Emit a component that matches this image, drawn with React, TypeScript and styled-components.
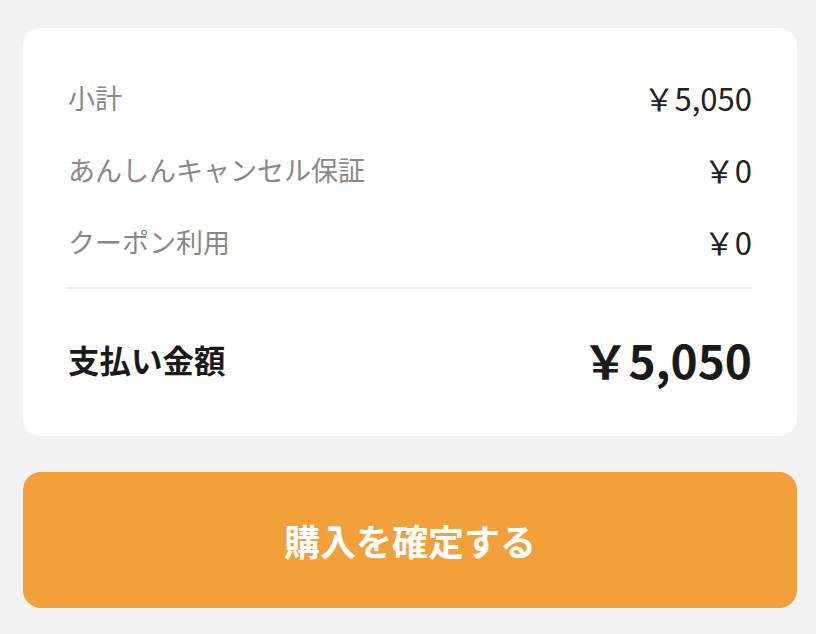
import React from 'react';
import styled, { createGlobalStyle } from 'styled-components';

const GlobalStyle = createGlobalStyle`
  html, body {
    margin: 0;
    padding: 0;
    background: #f2f2f2;
  }
  body {
    font-family: "Noto Sans CJK JP", "Noto Sans", sans-serif;
  }
`;

const Page = styled.div`
  padding: 28px 19px 0 23px;
  display: flex;
  flex-direction: column;
  gap: 36px;
`;

const Card = styled.section`
  background: #fff;
  border-radius: 18px;
  padding: 49px 45px 47px;
  display: flex;
  flex-direction: column;
`;

const Rows = styled.div`
  display: flex;
  flex-direction: column;
  gap: 32px;
`;

const Row = styled.div`
  display: flex;
  justify-content: space-between;
  align-items: center;
  height: 40px;
`;

const Label = styled.span`
  font-size: 27px;
  color: #888;
`;

const Value = styled.span`
  font-size: 31px;
  color: #222;
`;

const Divider = styled.hr`
  border: none;
  height: 2px;
  background: #e9e9e9;
  margin: 26px 0 0;
`;

const TotalRow = styled.div`
  display: flex;
  justify-content: space-between;
  align-items: center;
  height: 60px;
  margin-top: 40px;
`;

const TotalLabel = styled.span`
  font-size: 31.5px;
  font-weight: 700;
  color: #1a1a1a;
`;

const TotalValue = styled.span`
  font-size: 46px;
  font-weight: 700;
  color: #1a1a1a;
`;

const ConfirmButton = styled.button`
  height: 136px;
  border: none;
  border-radius: 18px;
  background: #f1a03a;
  color: #fff;
  font-family: inherit;
  font-size: 36px;
  font-weight: 700;
  cursor: pointer;
`;

const lines = [
  { label: '小計', value: '￥5,050' },
  { label: 'あんしんキャンセル保証', value: '￥0' },
  { label: 'クーポン利用', value: '￥0' },
];

const App = () => (
  <>
    <GlobalStyle />
    <Page>
      <Card>
        <Rows>
          {lines.map((l) => (
            <Row key={l.label}>
              <Label>{l.label}</Label>
              <Value>{l.value}</Value>
            </Row>
          ))}
        </Rows>
        <Divider />
        <TotalRow>
          <TotalLabel>支払い金額</TotalLabel>
          <TotalValue>￥5,050</TotalValue>
        </TotalRow>
      </Card>
      <ConfirmButton>購入を確定する</ConfirmButton>
    </Page>
  </>
);

export default App;
